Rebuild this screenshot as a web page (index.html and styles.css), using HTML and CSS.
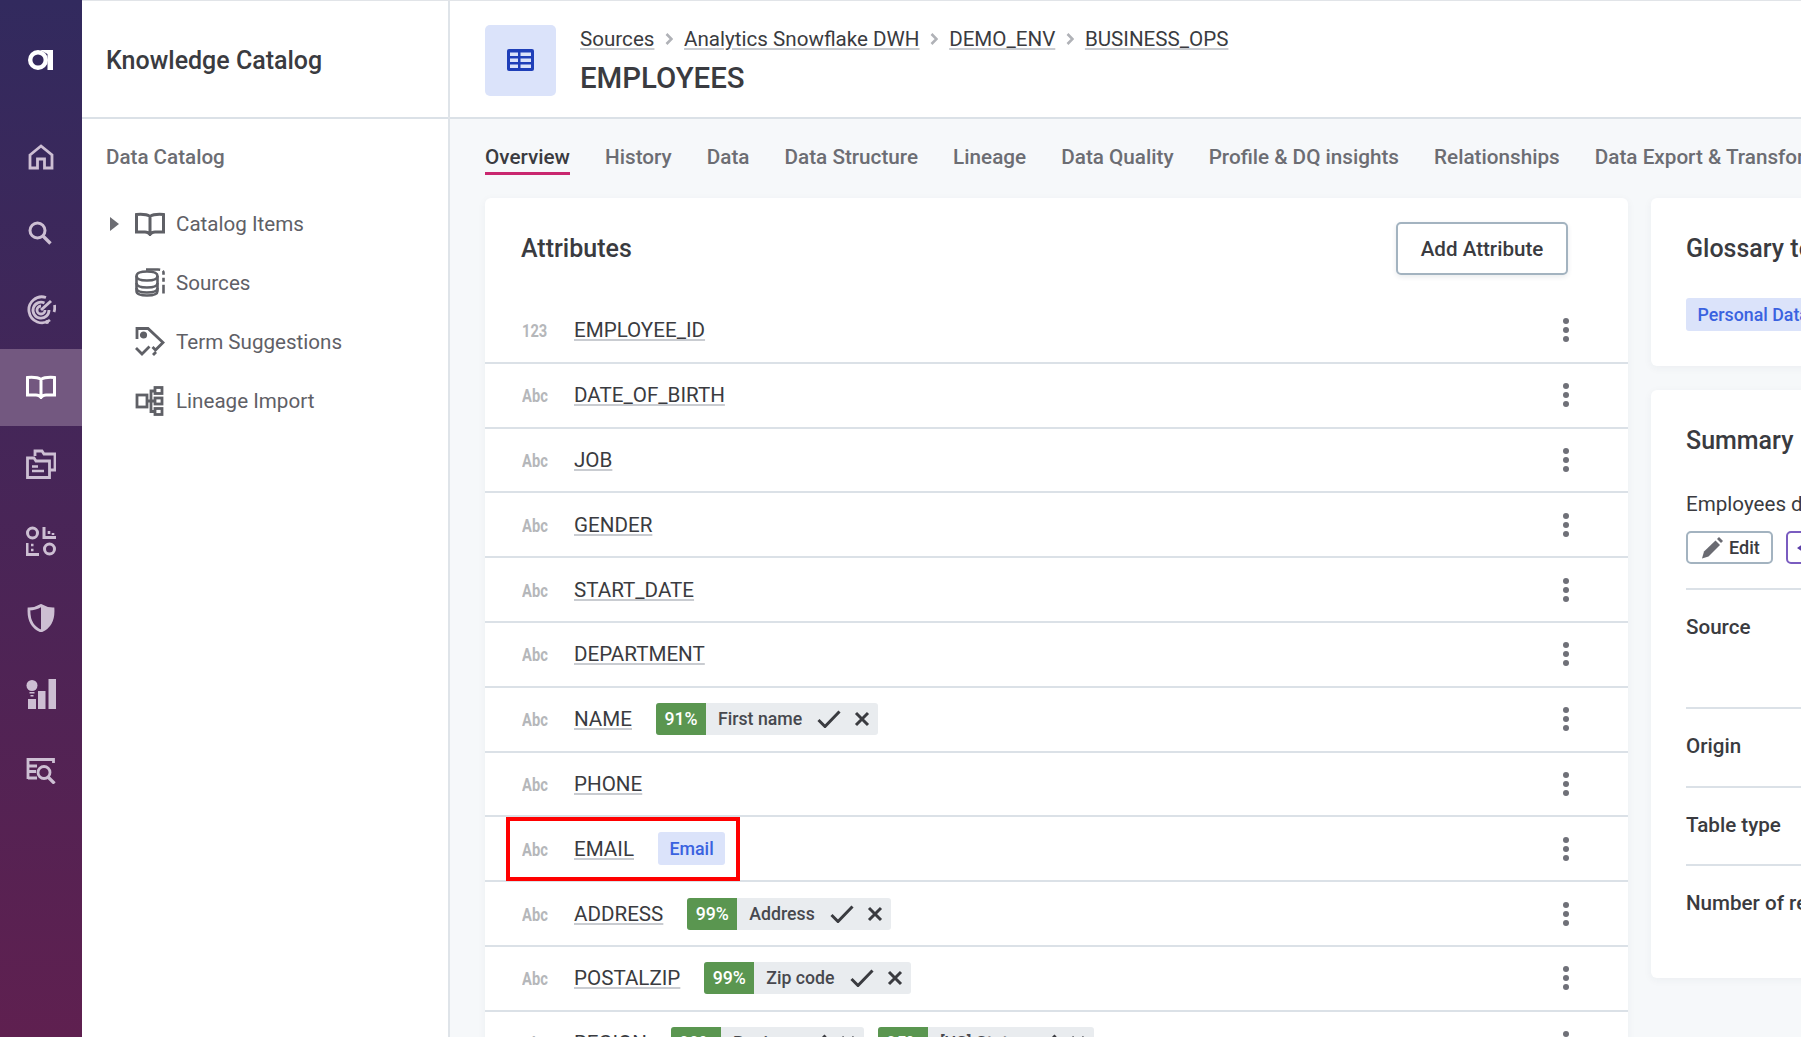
FILE: index.html
```html
<!DOCTYPE html>
<html lang="en">
<head>
    <meta charset="UTF-8">
    <meta name="viewport" content="width=device-width, initial-scale=1.0">
    <title>EMPLOYEES - Knowledge Catalog</title>
    <link rel="stylesheet" href="styles.css">
</head>
<body>

    <!-- Shared small icons -->
    <svg class="icon-defs">
        <symbol id="i-check" viewBox="0 0 24 18"><path d="M1.500 10 8 16.500 22.500 1.500" fill="none" stroke="currentColor" stroke-width="3"/></symbol>
        <symbol id="i-cross" viewBox="0 0 16 16"><path d="M2 2 14 14M14 2 2 14" fill="none" stroke="currentColor" stroke-width="3"/></symbol>
        <symbol id="i-more" viewBox="0 0 6 24"><circle cx="3" cy="3" r="3"/><circle cx="3" cy="12" r="3"/><circle cx="3" cy="21" r="3"/></symbol>
        <symbol id="i-chev" viewBox="0 0 8 12"><path d="M1.500 1 6.500 6 1.500 11" fill="none" stroke="currentColor" stroke-width="2.600"/></symbol>
        <symbol id="i-book" viewBox="0 0 30 24"><path d="M15 4.500C12 2.500 7 2 1.500 2.500V20H10C12 20 14 21 15 22.500 16 21 18 20 20 20H28.500V2.500C23 2 18 2.500 15 4.500ZM15 4.500V21" fill="none" stroke="currentColor" stroke-width="3"/></symbol>
    </svg>

    <div class="app">
        <!-- Left icon rail -->
        <nav class="rail">
            <div class="rail-logo">
                <svg width="25" height="20" viewBox="0 0 25 20"><circle cx="10" cy="10" r="7.800" fill="none" stroke="#fff" stroke-width="4.400"/><rect x="19.500" y="2" width="5.500" height="18" fill="#fff"/><path d="M12 0h13v4h-5.500z" fill="#fff"/></svg>
            </div>
            <a class="rail-item">
                <svg width="26" height="26" viewBox="0 0 26 26"><path d="M2 11 13 2l11 9v13h-7.500v-9h-7v9H2z" fill="none" stroke="currentColor" stroke-width="2.800"/></svg>
            </a>
            <a class="rail-item search">
                <svg width="24" height="24" viewBox="0 0 24 24"><circle cx="9.500" cy="9.500" r="7.500" fill="none" stroke="currentColor" stroke-width="3"/><path d="M15 15 22.500 22.500" stroke="currentColor" stroke-width="3.400"/></svg>
            </a>
            <a class="rail-item">
                <svg width="30" height="30" viewBox="0 0 30 30" fill="none" stroke="currentColor" stroke-width="2.800"><path d="M20 2.500A13 13 0 1 0 24 25"/><path d="M18.500 8A8 8 0 1 0 23 15"/><path d="M15 11A4 4 0 1 0 19 15"/><path d="M15 15 25 6" stroke-width="3"/><path d="M28.500 10A13 13 0 0 1 28 17"/><circle cx="21" cy="27" r="2" fill="currentColor" stroke="none"/></svg>
            </a>
            <a class="rail-item active">
                <svg width="30" height="24"><use href="#i-book"/></svg>
            </a>
            <a class="rail-item">
                <svg width="30" height="30" viewBox="0 0 30 30" fill="none" stroke="currentColor" stroke-width="2.800"><path d="M9 7V2h7l2 3h11v16h-5"/><path d="M1.500 9h6.500l2 3h13.500v16.500H1.500z"/><path d="M6 17.500h6M6 22h12" stroke-width="2.400"/></svg>
            </a>
            <a class="rail-item">
                <svg width="30" height="30" viewBox="0 0 30 30" fill="none" stroke="currentColor" stroke-width="3"><circle cx="6.500" cy="7" r="5"/><circle cx="23.500" cy="23" r="5"/><path d="M18 1v10.500h12"/><path d="M23 5v3M27 7v2" stroke-width="2.600"/><path d="M1 17v11.500h12"/><path d="M5 19h2.500M5 24h2.500" stroke-width="2.600"/></svg>
            </a>
            <a class="rail-item">
                <svg width="28" height="28" viewBox="0 0 28 28"><path d="M14 1.500C10 4 6 5 2 5c-.500 10 2 18 12 22 10-4 12.500-12 12-22-4 0-8-1-12-3.500z" fill="none" stroke="currentColor" stroke-width="2.800"/><path d="M14 1.500C18 4 22 5 26 5c.500 10-2 18-12 22z" fill="currentColor"/></svg>
            </a>
            <a class="rail-item">
                <svg width="30" height="30" viewBox="0 0 30 30" fill="currentColor"><circle cx="6" cy="6.500" r="5.500"/><rect x="3.500" y="13" width="5" height="1.500"/><rect x="4.500" y="16" width="3" height="1.500"/><rect x="2" y="20" width="8" height="10"/><rect x="12" y="12" width="7.500" height="18"/><rect x="22.500" y="0" width="7.500" height="30"/></svg>
            </a>
            <a class="rail-item">
                <svg width="30" height="26" viewBox="0 0 30 26" fill="none" stroke="currentColor" stroke-width="2.800"><path d="M2 21V1.500h25.500V5"/><path d="M2 8h9M2 13.500h8M2 20h9"/><circle cx="18" cy="14.500" r="6"/><path d="M22 19 28.500 25.500" stroke-width="3.200"/></svg>
            </a>
        </nav>

        <!-- Catalog tree -->
        <aside class="sidebar">
            <div class="sidebar-head">Knowledge Catalog</div>
            <div class="sidebar-title">Data Catalog</div>
            <ul class="tree">
                <li class="tree-row">
                    <span class="tree-caret"></span>
                    <svg width="30" height="24"><use href="#i-book"/></svg>
                    <span>Catalog Items</span>
                </li>
                <li class="tree-row no-caret">
                    <svg width="30" height="30" viewBox="0 0 30 30" fill="none" stroke="currentColor" stroke-width="2.600"><path d="M1.500 8c0-3 4-4.500 10.500-4.500S22.500 5 22.500 8v15c0 3-4 4.500-10.500 4.500S1.500 26 1.500 23z"/><path d="M1.500 8c0 3 4 4.500 10.500 4.500S22.500 11 22.500 8M1.500 15c0 3 4 4.500 10.500 4.500S22.500 18 22.500 15M1.500 20c0 3 4 4.500 10.500 4.500S22.500 23 22.500 20"/><path d="M11 1.500h12c3 0 5.500 1 5.500 3v21" stroke-dasharray="14 3 4 3 4 3"/></svg>
                    <span>Sources</span>
                </li>
                <li class="tree-row no-caret">
                    <svg width="30" height="30" viewBox="0 0 30 30" fill="none" stroke="currentColor" stroke-width="2.800"><path d="M2 12V1.500h11L28 15.500 20.500 23l-3-3"/><circle cx="8.500" cy="8" r="2.200" fill="currentColor"/><path d="M1 21 7 27l7.500-7.500"/><path d="M18 28l3-3"/></svg>
                    <span>Term Suggestions</span>
                </li>
                <li class="tree-row no-caret">
                    <svg width="30" height="30" viewBox="0 0 30 30" fill="none" stroke="currentColor" stroke-width="2.800"><rect x="2" y="9" width="10" height="12"/><rect x="20" y="1.500" width="7" height="6"/><rect x="20" y="12" width="7" height="6"/><rect x="20" y="22.500" width="7" height="6"/><path d="M12 15h8M16 15V5h4M16 15v10.500h4"/></svg>
                    <span>Lineage Import</span>
                </li>
            </ul>
        </aside>

        <main class="main">
            <header class="page-head">
                <div class="page-icon">
                    <svg width="27" height="22" viewBox="0 0 27 22"><rect width="27" height="22" rx="2" fill="#1f3fb8"/><path d="M3 3.500h8v3.500H3zM13.500 3.500H24v3.500H13.500zM3 9.500h8V13H3zM13.500 9.500H24V13H13.500zM3 15.500h8v3.500H3zM13.500 15.500H24v3.500H13.500z" fill="#dbe3fa"/></svg>
                </div>
                <div class="page-names">
                    <div class="crumbs">
                        <a>Sources</a><svg class="crumb-sep"><use href="#i-chev"/></svg>
                        <a>Analytics Snowflake DWH</a><svg class="crumb-sep"><use href="#i-chev"/></svg>
                        <a>DEMO_ENV</a><svg class="crumb-sep"><use href="#i-chev"/></svg>
                        <a>BUSINESS_OPS</a>
                    </div>
                    <h1 class="page-title">EMPLOYEES</h1>
                </div>
            </header>

            <div class="tabs">
                <a class="tab active">Overview</a>
                <a class="tab">History</a>
                <a class="tab">Data</a>
                <a class="tab">Data Structure</a>
                <a class="tab">Lineage</a>
                <a class="tab">Data Quality</a>
                <a class="tab">Profile &amp; DQ insights</a>
                <a class="tab">Relationships</a>
                <a class="tab">Data Export &amp; Transformations</a>
            </div>

            <div class="columns">
                <section class="card attributes">
                    <div class="attr-head">
                        <h2 class="card-title">Attributes</h2>
                        <button class="btn-add">Add Attribute</button>
                    </div>

                    <div class="attr-row"><span class="attr-type">123</span><a class="attr-name">EMPLOYEE_ID</a><svg class="more"><use href="#i-more"/></svg></div>
                    <div class="attr-row"><span class="attr-type">Abc</span><a class="attr-name">DATE_OF_BIRTH</a><svg class="more"><use href="#i-more"/></svg></div>
                    <div class="attr-row"><span class="attr-type">Abc</span><a class="attr-name">JOB</a><svg class="more"><use href="#i-more"/></svg></div>
                    <div class="attr-row"><span class="attr-type">Abc</span><a class="attr-name">GENDER</a><svg class="more"><use href="#i-more"/></svg></div>
                    <div class="attr-row"><span class="attr-type">Abc</span><a class="attr-name">START_DATE</a><svg class="more"><use href="#i-more"/></svg></div>
                    <div class="attr-row"><span class="attr-type">Abc</span><a class="attr-name">DEPARTMENT</a><svg class="more"><use href="#i-more"/></svg></div>
                    <div class="attr-row">
                        <span class="attr-type">Abc</span><a class="attr-name">NAME</a>
                        <span class="hint"><b class="hint-score">91%</b><span class="hint-label">First name</span><svg class="hint-ok"><use href="#i-check"/></svg><svg class="hint-no"><use href="#i-cross"/></svg></span>
                        <svg class="more"><use href="#i-more"/></svg>
                    </div>
                    <div class="attr-row"><span class="attr-type">Abc</span><a class="attr-name">PHONE</a><svg class="more"><use href="#i-more"/></svg></div>
                    <div class="attr-row">
                        <span class="attr-type">Abc</span><a class="attr-name">EMAIL</a>
                        <span class="term">Email</span>
                        <svg class="more"><use href="#i-more"/></svg>
                        <div class="highlight"></div>
                    </div>
                    <div class="attr-row">
                        <span class="attr-type">Abc</span><a class="attr-name">ADDRESS</a>
                        <span class="hint"><b class="hint-score">99%</b><span class="hint-label">Address</span><svg class="hint-ok"><use href="#i-check"/></svg><svg class="hint-no"><use href="#i-cross"/></svg></span>
                        <svg class="more"><use href="#i-more"/></svg>
                    </div>
                    <div class="attr-row">
                        <span class="attr-type">Abc</span><a class="attr-name">POSTALZIP</a>
                        <span class="hint"><b class="hint-score">99%</b><span class="hint-label">Zip code</span><svg class="hint-ok"><use href="#i-check"/></svg><svg class="hint-no"><use href="#i-cross"/></svg></span>
                        <svg class="more"><use href="#i-more"/></svg>
                    </div>
                    <div class="attr-row">
                        <span class="attr-type">Abc</span><a class="attr-name">REGION</a>
                        <span class="hint"><b class="hint-score">99%</b><span class="hint-label">Region</span><svg class="hint-ok"><use href="#i-check"/></svg><svg class="hint-no"><use href="#i-cross"/></svg></span>
                        <span class="hint"><b class="hint-score">95%</b><span class="hint-label">[US] State</span><svg class="hint-ok"><use href="#i-check"/></svg><svg class="hint-no"><use href="#i-cross"/></svg></span>
                        <svg class="more"><use href="#i-more"/></svg>
                    </div>
                </section>

                <div class="side-col">
                    <section class="card glossary">
                        <h2 class="card-title">Glossary terms</h2>
                        <span class="term term-wide">Personal Data</span>
                    </section>

                    <section class="card summary">
                        <h2 class="card-title">Summary</h2>
                        <p class="summary-text">Employees data</p>
                        <div class="summary-actions">
                            <button class="btn-small">
                                <svg width="24" height="24" viewBox="0 0 24 24"><path d="M2 22.500 4 15.500 15.500 4.500 20 9 8.500 20.500z" fill="#6a6b72"/><path d="M17 3l2-2 4 4-2 2z" fill="#6a6b72"/></svg>
                                Edit
                            </button>
                            <button class="btn-small btn-purple">
                                <svg width="10" height="10" viewBox="0 0 10 10"><path d="M0 5 6 1v3h4v2H6v3z" fill="#5b3ea8"/></svg>
                                Ask
                            </button>
                        </div>
                        <div class="fact fact-source">Source</div>
                        <div class="fact fact-origin">Origin</div>
                        <div class="fact fact-type">Table type</div>
                        <div class="fact fact-last">Number of records</div>
                    </section>

                    <section class="card"></section>
                </div>
            </div>
        </main>
    </div>

</body>
</html>
```

FILE: styles.css
```css
* {
    box-sizing: border-box;
}

html, body {
    margin: 0;
    height: 100%;
    overflow: hidden;
}

body {
    font-family: Roboto, "Liberation Sans", sans-serif;
    color: #3a3b40;
    background-color: #fff;
}

.icon-defs {
    display: none;
}

.app {
    display: flex;
    height: 1037px;
    border-top: 1px solid #e1e4e8;
}

/* Icon rail */
.rail {
    flex: none;
    width: 82px;
    margin-top: -1px;
    background: linear-gradient(180deg, #322a5e 0%, #5f2050 100%);
    display: flex;
    flex-direction: column;
}

.rail-logo {
    height: 118.5px;
    padding: 2px 2px 0 0;
    display: flex;
    align-items: center;
    justify-content: center;
}

.rail-item {
    height: 76.8px;
    display: flex;
    align-items: center;
    justify-content: center;
    color: #cdbfd3;
}

.rail-item.search {
    padding: 0 2px 2px 0;
}

.rail-item.active {
    color: #fff;
    background-color: #735880;
}

/* Sidebar */
.sidebar {
    flex: none;
    width: 368px;
    border-right: 2px solid #dfe4e9;
    color: #5f6066;
}

.sidebar-head {
    height: 118px;
    padding: 2px 24px 0;
    display: flex;
    align-items: center;
    font-size: 25px;
    font-weight: 500;
    color: #3a3b40;
    border-bottom: 2px solid #dbe1e7;
}

.sidebar-title {
    padding: 25px 24px 0;
    font-size: 20.6px;
    line-height: 26px;
    font-weight: 500;
    color: #6c6d73;
}

.tree {
    list-style: none;
    margin: 24px 0 0;
    padding: 0 0 0 24px;
}

.tree-row {
    height: 59px;
    display: flex;
    align-items: center;
    gap: 11px;
    font-size: 20.6px;
}

.tree-row.no-caret {
    padding-left: 29px;
}

.tree-caret {
    width: 0;
    height: 0;
    margin: 0 5px 0 4px;
    border-left: 9px solid #6c6d73;
    border-top: 7px solid transparent;
    border-bottom: 7px solid transparent;
}

/* Main area */
.main {
    flex: 1;
    min-width: 0;
    background-color: #f6f8fa;
    overflow: hidden;
}

.page-head {
    height: 118px;
    padding: 2px 35px 0;
    display: flex;
    align-items: center;
    gap: 24px;
    background-color: #fff;
    border-bottom: 2px solid #dbe1e7;
}

.page-icon {
    width: 71px;
    height: 71px;
    border-radius: 5px;
    background-color: #dbe3fa;
    display: flex;
    align-items: center;
    justify-content: center;
}

.page-names {
    margin-top: -2px;
}

.crumbs {
    display: flex;
    align-items: center;
    font-size: 20.6px;
    line-height: 28px;
}

.crumbs a, .attr-name {
    text-decoration: underline;
    text-decoration-color: #c9ccd1;
    text-decoration-thickness: 1.5px;
    text-underline-offset: 2px;
}

.crumb-sep {
    width: 8px;
    height: 12px;
    margin: 0 10.8px;
    color: #b0b2b7;
}

.page-title {
    margin: 9px 0 0;
    font-size: 29.4px;
    line-height: 32px;
    font-weight: 500;
}

.tabs {
    display: flex;
    gap: 35.1px;
    padding: 25px 0 0 35px;
    white-space: nowrap;
}

.tab {
    font-size: 20.7px;
    line-height: 26px;
    font-weight: 500;
    color: #6c6d73;
    padding-bottom: 2px;
    border-bottom: 3px solid transparent;
}

.tab.active {
    color: #3a3b40;
    border-bottom-color: #c9276f;
}

.columns {
    display: flex;
    align-items: flex-start;
    gap: 23px;
    margin: 23px 0 0 35px;
}

.card {
    background-color: #fff;
    border-radius: 6px;
    box-shadow: 0 2px 8px rgba(40, 60, 80, 0.05);
}

.card-title {
    margin: 0;
    font-size: 25px;
    line-height: 30px;
    font-weight: 500;
}

/* Attributes list */
.attributes {
    flex: none;
    width: 1143px;
}

.attr-head {
    height: 101px;
    padding: 24px 60px 0 36px;
    display: flex;
    justify-content: space-between;
}

.attr-head .card-title {
    margin-top: 12px;
}

.btn-add {
    width: 172px;
    height: 53px;
    font-family: inherit;
    font-size: 20.6px;
    font-weight: 500;
    color: #3a3b40;
    background-color: #fff;
    border: 2px solid #a3b3c0;
    border-radius: 5px;
    box-shadow: 0 2px 5px rgba(40, 60, 80, 0.1);
}

.attr-row {
    position: relative;
    height: 64.8px;
    padding: 0 59px 0 37px;
    display: flex;
    align-items: center;
    border-bottom: 2px solid #dbe1e7;
}

.attr-type {
    flex: none;
    width: 52px;
    font-size: 17.5px;
    font-weight: 700;
    color: #b5b7ba;
    padding-top: 2px;
    transform: scaleX(0.84);
    transform-origin: left center;
}

.attr-name {
    font-size: 20.6px;
    margin-right: 24px;
}

.more {
    width: 6px;
    height: 24px;
    margin-left: auto;
    fill: #6f7078;
}

.hint {
    display: flex;
    align-items: center;
    height: 32px;
    margin-right: 14px;
    border-radius: 3px;
    overflow: hidden;
    background-color: #e9ecef;
    padding-right: 8px;
}

.hint-score {
    width: 50px;
    height: 100%;
    display: flex;
    align-items: center;
    justify-content: center;
    font-size: 17.7px;
    font-weight: 500;
    color: #fff;
    background-color: #5a9650;
}

.hint-label {
    margin-left: 12px;
    font-size: 17.7px;
    font-weight: 500;
    color: #47484e;
}

.hint-ok {
    width: 24px;
    height: 18px;
    margin-left: 15px;
    color: #3a3b40;
}

.hint-no {
    width: 16px;
    height: 16px;
    margin-left: 13px;
    color: #3a3b40;
}

.term {
    height: 33px;
    padding: 0 11.5px;
    display: inline-flex;
    align-items: center;
    font-size: 17.8px;
    font-weight: 500;
    color: #3a62e0;
    background-color: #dbe3fa;
    border-radius: 3px;
}

/* Red marker round the EMAIL row */
.highlight {
    position: absolute;
    left: 21px;
    top: 0;
    width: 234px;
    height: 64px;
    border: 4px solid #ff0000;
}

/* Right column, runs off the page */
.side-col {
    flex: none;
    width: 500px;
    display: flex;
    flex-direction: column;
    gap: 24px;
}

.glossary {
    height: 168px;
    padding: 36px 35px 0;
}

.term-wide {
    margin-top: 34px;
    white-space: nowrap;
}

.summary {
    height: 588px;
    padding: 36px 35px 0;
}

.summary-text {
    margin: 35px 0 0;
    font-size: 20.6px;
    line-height: 26px;
}

.summary-actions {
    display: flex;
    gap: 13px;
    margin-top: 14px;
    padding-bottom: 24px;
    border-bottom: 2px solid #dbe1e7;
}

.btn-small {
    height: 33px;
    padding: 0 11px 0 12px;
    display: flex;
    align-items: center;
    gap: 5px;
    font-family: inherit;
    font-size: 18px;
    font-weight: 500;
    color: #3a3b40;
    background-color: #fff;
    border: 2px solid #a3b3c0;
    border-radius: 5px;
}

.btn-purple {
    padding-left: 9px;
    border-color: #7a5cc0;
    color: #5b3ea8;
}

.fact {
    font-size: 20.6px;
    font-weight: 500;
    line-height: 26px;
    color: #3a3b40;
}

.fact-source {
    height: 119px;
    padding-top: 24px;
    border-bottom: 2px solid #dbe1e7;
}

.fact-origin {
    height: 79px;
    padding-top: 24px;
    border-bottom: 2px solid #dbe1e7;
}

.fact-type {
    height: 78px;
    padding-top: 24px;
    border-bottom: 2px solid #dbe1e7;
}

.fact-last {
    padding-top: 24px;
}
```
